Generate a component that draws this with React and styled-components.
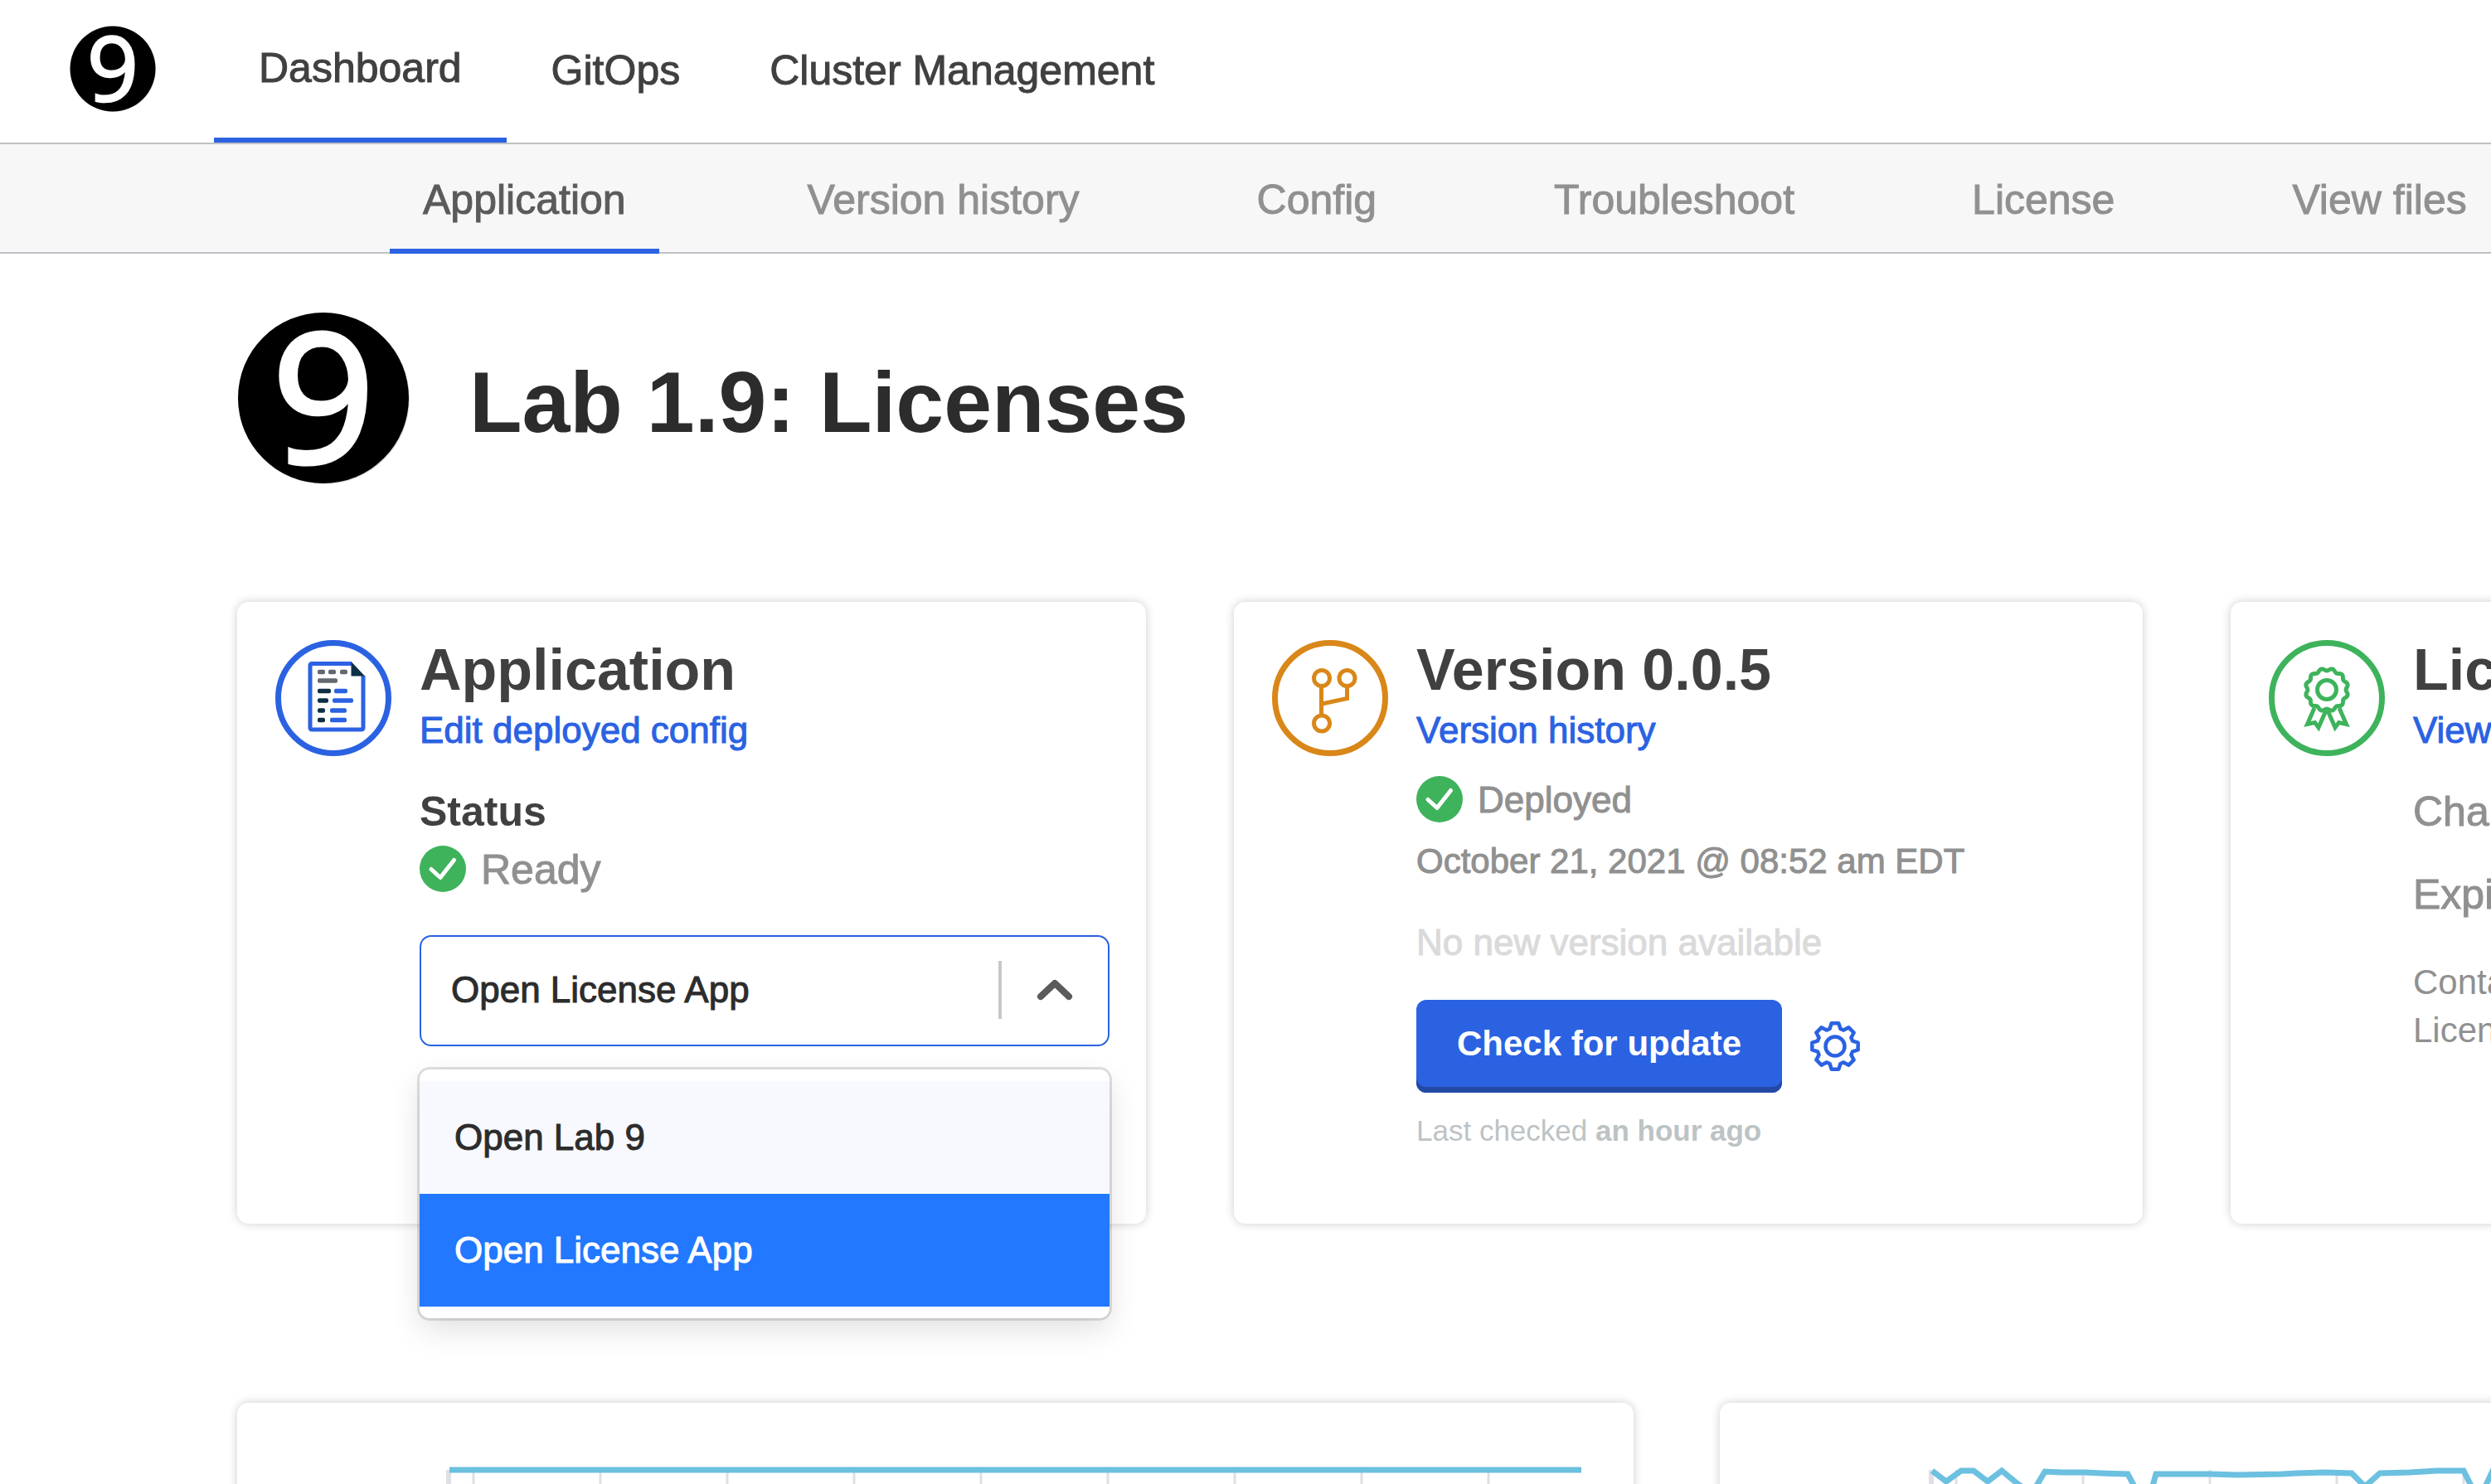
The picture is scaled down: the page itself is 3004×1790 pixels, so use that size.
import React, { useState } from "react";
import styled, { createGlobalStyle, css } from "styled-components";

const color = {
  blue: "#2b62e2",
  blueDark: "#2349a5",
  select: "#2278ff",
  green: "#3eb35c",
  orange: "#d98719",
  ink: "#2c2c2c",
  heading: "#404040",
  tab: "#5b5b5b",
  muted: "#909090",
  faint: "#dadada",
  pale: "#bdc3c5",
  rule: "#bec2c6",
  navy: "#0c2f45",
  series: "#6cc0e0",
  grid: "#dfe0e5",
};

const GlobalStyle = createGlobalStyle`
  *, *::before, *::after { box-sizing: border-box; }
  body {
    margin: 0;
    background: #fff;
    font-family: "Liberation Sans", Arial, sans-serif;
    color: ${color.heading};
  }
  h1, h2, p, ul { margin: 0; padding: 0; }
  ul { list-style: none; }
  a { text-decoration: none; }
  button { font-family: inherit; cursor: pointer; }
`;

/* Weight between regular and bold, which the family does not ship. */
const medium = css`
  -webkit-text-stroke: 1px currentColor;
`;

const Page = styled.div`
  height: 100vh;
  overflow: hidden;
`;

const Header = styled.header`
  display: flex;
  align-items: stretch;
  gap: 70px;
  height: 174px;
  padding-left: 84px;
  border-bottom: 2px solid ${color.rule};
`;

const Brand = styled.a`
  display: flex;
  align-items: center;
  padding-bottom: 6px;
`;

const MainNav = styled.nav`
  display: flex;
`;

const MainTab = styled.a`
  display: flex;
  align-items: center;
  padding: 0 54px 3px;
  font-size: 50px;
  color: ${color.heading};
  white-space: nowrap;
  border-bottom: ${(p) => (p.$active ? `6px solid ${color.blue}` : "0")};
  ${medium}
`;

const SubNav = styled.nav`
  display: flex;
  gap: 144px;
  height: 132px;
  padding-left: 470px;
  background: #f7f7f7;
  border-bottom: 2px solid ${color.rule};
`;

const SubTab = styled.a`
  display: flex;
  align-items: center;
  margin-bottom: -2px;
  padding: 2px ${(p) => (p.$active ? 40 : 35)}px 0;
  font-size: 50px;
  color: ${(p) => (p.$active ? color.tab : color.muted)};
  white-space: nowrap;
  box-shadow: ${(p) => (p.$active ? `inset 0 -6px ${color.blue}` : "none")};
  ${medium}
`;

const Content = styled.main`
  padding: 70px 0 0 286px;
`;

const AppHeader = styled.div`
  display: flex;
  align-items: center;
  gap: 72px;
  margin-bottom: 142px;
`;

const Title = styled.h1`
  padding-top: 10px;
  font-size: 104px;
  line-height: 120px;
  font-weight: 700;
  color: ${color.ink};
`;

const CardRow = styled.section`
  display: grid;
  grid-template-columns: repeat(3, minmax(1096px, 1fr));
  gap: 106px;
  margin-bottom: 216px;
`;

const ChartRow = styled.section`
  display: grid;
  grid-template-columns: repeat(2, minmax(1684px, 1fr));
  gap: 104px;
`;

const panel = css`
  background: #fff;
  border-radius: 14px;
  box-shadow: 0 0 12px rgba(0, 0, 0, 0.2);
`;

const Card = styled.article`
  display: flex;
  align-items: flex-start;
  gap: 34px;
  min-height: 750px;
  padding: 46px 44px 46px 46px;
  ${panel}
`;

const CardBody = styled.div`
  flex: 1;
  min-width: 0;
  display: flex;
  flex-direction: column;
`;

const CardTitle = styled.h2`
  font-size: 70px;
  line-height: 72px;
  font-weight: 700;
  white-space: nowrap;
`;

const CardLink = styled.a`
  align-self: flex-start;
  margin-top: 10px;
  font-size: 44px;
  line-height: 54px;
  color: ${color.blue};
  white-space: nowrap;
  ${medium}
`;

const Label = styled.p`
  margin-top: 40px;
  font-size: 50px;
  line-height: 62px;
  font-weight: 700;
`;

const Field = styled.p`
  margin-top: ${(p) => (p.$first ? 40 : 38)}px;
  font-size: 50px;
  line-height: 62px;
  color: ${color.muted};
  white-space: nowrap;
  ${medium}
`;

const State = styled.p`
  display: flex;
  align-items: center;
  gap: 18px;
  margin-top: ${(p) => (p.$large ? 10 : 28)}px;
  font-size: ${(p) => (p.$large ? 50 : 44)}px;
  line-height: 54px;
  color: ${color.muted};
  ${medium}
`;

const StateText = styled.span`
  padding-top: 2px;
`;

const Released = styled.p`
  margin-top: 20px;
  font-size: 42px;
  line-height: 54px;
  color: ${color.muted};
  white-space: nowrap;
  ${medium}
`;

const Notice = styled.p`
  margin-top: 44px;
  font-size: 44px;
  line-height: 54px;
  color: ${color.faint};
  ${medium}
`;

const Actions = styled.div`
  display: flex;
  align-items: center;
  gap: 34px;
  margin-top: 42px;
`;

const PrimaryButton = styled.button`
  height: 112px;
  padding: 0 49px 6px;
  border: 0;
  border-radius: 12px;
  background: ${color.blue};
  box-shadow: inset 0 -7px ${color.blueDark};
  color: #fff;
  font-size: 42px;
  font-weight: 700;
`;

const IconButton = styled.button`
  display: flex;
  padding: 0;
  border: 0;
  background: none;
`;

const Checked = styled.p`
  margin-top: 24px;
  font-size: 35px;
  line-height: 44px;
  color: ${color.pale};
`;

const Help = styled.p`
  margin-top: 46px;
  font-size: 42px;
  line-height: 58px;
  color: ${color.muted};
`;

const Select = styled.div`
  position: relative;
  margin-top: 52px;
`;

const SelectControl = styled.button`
  display: flex;
  align-items: center;
  width: 100%;
  height: 134px;
  padding: 0 42px 2px 36px;
  border: 2px solid ${color.blue};
  border-radius: 14px;
  background: #fff;
  color: ${color.ink};
  font-size: 44px;
  text-align: left;
  ${medium}
`;

const SelectValue = styled.span`
  flex: 1;
`;

const Divider = styled.span`
  width: 4px;
  height: 70px;
  margin-right: 42px;
  background: #c8c8c8;
`;

const Menu = styled.ul`
  position: absolute;
  top: 100%;
  left: 0;
  right: 0;
  z-index: 1;
  && {
    margin-top: 28px;
    padding: 14px 0;
  }
  border-radius: 12px;
  background: #fff;
  box-shadow: 0 0 0 3px rgba(0, 0, 0, 0.12), 0 14px 36px rgba(0, 0, 0, 0.12);
`;

const Option = styled.li`
  padding: 0 42px;
  font-size: 44px;
  line-height: 136px;
  cursor: pointer;
  color: ${(p) => (p.$selected ? "#fff" : color.ink)};
  background: ${(p) => (p.$selected ? color.select : "#f8f9fe")};
  ${medium}
`;

const ChartCard = styled.figure`
  margin: 0;
  min-height: 400px;
  ${panel}
`;

const ChartSvg = styled.svg`
  display: block;
`;

const Icon = styled.svg`
  display: block;
  flex: none;
  overflow: visible;
`;

function Logo({ size }) {
  return (
    <Icon width={size} height={size} viewBox="0 0 208 208" role="img" aria-label="Lab 9">
      <circle cx="105" cy="105" r="103" fill="#dedede" />
      <circle cx="104" cy="104" r="103" fill="#000" />
      <text
        x="104"
        y="182"
        textAnchor="middle"
        fontFamily='"Open Sans", "Noto Sans", sans-serif'
        fontSize="217"
        fill="#fff"
        stroke="#fff"
        strokeWidth="5"
      >
        9
      </text>
    </Icon>
  );
}

function Check() {
  return (
    <Icon width="56" height="56" viewBox="0 0 56 56" aria-hidden="true">
      <circle cx="28" cy="28" r="28" fill={color.green} />
      <path d="M14 28.500 25 38.500 41.500 17.500" fill="none" stroke="#fff" strokeWidth="5" strokeLinecap="round" strokeLinejoin="round" />
    </Icon>
  );
}

function Badge({ tone, children }) {
  return (
    <Icon width="140" height="140" viewBox="0 0 140 140" fill="none" aria-hidden="true">
      <circle cx="70" cy="70" r="66.5" stroke={tone} strokeWidth="7" />
      {children}
    </Icon>
  );
}

const documentLines = [
  [51, 60, 38.5, "#62686f"],
  [64, 73, 38.5, "#62686f"],
  [78, 87, 38.5, "#62686f"],
  [51, 75, 49, "#62686f"],
  [51, 67, 61.5, color.navy],
  [71, 87, 61.5, color.blue],
  [51, 64, 73, color.navy],
  [69, 94, 73, color.blue],
  [51, 60, 85, color.navy],
  [66, 86, 85, color.blue],
  [51, 60, 96.5, color.navy],
  [66, 86, 96.5, color.blue],
];

function DocumentIcon() {
  return (
    <Badge tone={color.blue}>
      <path d="M92 28.500H44a2 2 0 0 0-2 2V106a2 2 0 0 0 2 2h60a2 2 0 0 0 2-2V43" stroke={color.blue} strokeWidth="5" />
      <path d="M91.500 26 108 43.500H91.500z" fill={color.navy} />
      {documentLines.map(([x1, x2, y, fill]) => (
        <rect key={`${x1}-${y}`} x={x1} y={y - 2.75} width={x2 - x1} height="5.5" rx="2" fill={fill} />
      ))}
    </Badge>
  );
}

function BranchIcon() {
  return (
    <Badge tone={color.orange}>
      <g stroke={color.orange} strokeWidth="5">
        <circle cx="60" cy="46" r="9.500" />
        <circle cx="90.500" cy="46" r="9.500" />
        <circle cx="60" cy="100.500" r="9.500" />
        <path d="M59.500 56v35M90.500 56v14.500L60 77" />
      </g>
    </Badge>
  );
}

function wave(cx, cy, radius, depth, lobes) {
  const steps = lobes * 12;
  const points = Array.from({ length: steps }, (_, i) => {
    const a = (i / steps) * Math.PI * 2 + Math.PI / 2;
    const r = radius - depth * Math.cos(lobes * a);
    return `${(cx + r * Math.cos(a)).toFixed(2)} ${(cy + r * Math.sin(a)).toFixed(2)}`;
  });
  return `M${points.join("L")}Z`;
}

function RibbonIcon() {
  return (
    <Badge tone={color.green}>
      <g stroke={color.green} strokeWidth="5">
        <path d={wave(70, 60, 24.5, 1.4, 12)} />
        <circle cx="70" cy="60" r="11.500" />
        <path d="M55 82 46.500 101.500 55.500 99.500 60 105.500 69 85M85 82 93.500 101.500 84.500 99.500 80 105.500 71 85" />
      </g>
    </Badge>
  );
}

function gear(center, outer, inner) {
  const at = (r, deg) => {
    const a = (deg * Math.PI) / 180;
    return `${(center + r * Math.cos(a)).toFixed(2)} ${(center + r * Math.sin(a)).toFixed(2)}`;
  };
  const parts = [];
  for (let i = 0; i < 8; i += 1) {
    const a = i * 45;
    parts.push(at(inner, a - 17), at(outer, a - 9), at(outer, a + 9), at(inner, a + 17));
  }
  return `M${parts.join("L")}Z`;
}

function GearIcon() {
  return (
    <Icon width="60" height="60" viewBox="0 0 60 60" fill="none" stroke={color.blue} strokeWidth="4.500" strokeLinejoin="round">
      <path d={gear(30, 28, 22)} />
      <circle cx="30" cy="30" r="11.500" />
    </Icon>
  );
}

function Chevron() {
  return (
    <Icon width="44" height="28" viewBox="0 0 44 28" fill="none" aria-hidden="true">
      <path d="M5 22 22 6l17 16" stroke={color.tab} strokeWidth="8" strokeLinecap="round" strokeLinejoin="round" />
    </Icon>
  );
}

function Chart({ axis, first, points, label }) {
  const lines = Array.from({ length: 9 }, (_, i) => first + i * 153);
  return (
    <ChartCard>
      <ChartSvg width="1684" height="400" viewBox="0 0 1684 400" role="img" aria-label={label}>
        <path d={`M${axis - 1} 81V400`} stroke={color.grid} strokeWidth="6" />
        {lines.map((x) => (
          <path key={x} d={`M${x} 81V400`} stroke={color.grid} strokeWidth="3" />
        ))}
        <polyline points={points} fill="none" stroke={color.series} strokeWidth="7" />
      </ChartSvg>
    </ChartCard>
  );
}

const usageA = "256,81 1621,81";
const usageB =
  "256,82 273,95 291,82 306,82 323,95 340,82 357,96 376,110 392,83 413,84 440,84 461,85 492,86 507,114 518,114 526,86 591,86 624,87 678,86 696,85 729,84 762,85 778,101 796,85 832,84 865,82 897,82 912,112 918,112 932,82 980,82";

const tabs = ["Application", "Version history", "Config", "Troubleshoot", "License", "View files"];
const targets = ["Open Lab 9", "Open License App"];

function TargetSelect() {
  const [open, setOpen] = useState(true);
  const [value, setValue] = useState(targets[1]);
  return (
    <Select>
      <SelectControl type="button" aria-haspopup="listbox" aria-expanded={open} onClick={() => setOpen(!open)}>
        <SelectValue>{value}</SelectValue>
        <Divider />
        <Chevron />
      </SelectControl>
      {open && (
        <Menu role="listbox" aria-label="Open application">
          {targets.map((t) => (
            <Option
              key={t}
              role="option"
              aria-selected={t === value}
              $selected={t === value}
              onClick={() => {
                setValue(t);
                setOpen(false);
              }}
            >
              {t}
            </Option>
          ))}
        </Menu>
      )}
    </Select>
  );
}

export default function App() {
  return (
    <>
      <GlobalStyle />
      <Page>
        <Header>
          <Brand href="#">
            <Logo size={104} />
          </Brand>
          <MainNav>
            <MainTab href="#" $active>Dashboard</MainTab>
            <MainTab href="#">GitOps</MainTab>
            <MainTab href="#">Cluster Management</MainTab>
          </MainNav>
        </Header>
        <SubNav>
          {tabs.map((t, i) => (
            <SubTab key={t} href="#" $active={i === 0}>{t}</SubTab>
          ))}
        </SubNav>
        <Content>
          <AppHeader>
            <Logo size={208} />
            <Title>Lab 1.9: Licenses</Title>
          </AppHeader>
          <CardRow>
            <Card>
              <DocumentIcon />
              <CardBody>
                <CardTitle>Application</CardTitle>
                <CardLink href="#">Edit deployed config</CardLink>
                <Label>Status</Label>
                <State $large>
                  <Check />
                  <StateText>Ready</StateText>
                </State>
                <TargetSelect />
              </CardBody>
            </Card>
            <Card>
              <BranchIcon />
              <CardBody>
                <CardTitle>Version 0.0.5</CardTitle>
                <CardLink href="#">Version history</CardLink>
                <State>
                  <Check />
                  <StateText>Deployed</StateText>
                </State>
                <Released>October 21, 2021 @ 08:52 am EDT</Released>
                <Notice>No new version available</Notice>
                <Actions>
                  <PrimaryButton type="button">Check for update</PrimaryButton>
                  <IconButton type="button" aria-label="Update settings">
                    <GearIcon />
                  </IconButton>
                </Actions>
                <Checked>
                  Last checked <b>an hour ago</b>
                </Checked>
              </CardBody>
            </Card>
            <Card>
              <RibbonIcon />
              <CardBody>
                <CardTitle>License</CardTitle>
                <CardLink href="#">View license</CardLink>
                <Field $first>Channel</Field>
                <Field>Expires</Field>
                <Help>
                  Contact
                  <br />
                  License
                </Help>
              </CardBody>
            </Card>
          </CardRow>
          <ChartRow>
            <Chart axis={256} first={285} points={usageA} label="Usage" />
            <Chart axis={256} first={285} points={usageB} label="Usage over time" />
          </ChartRow>
        </Content>
      </Page>
    </>
  );
}
